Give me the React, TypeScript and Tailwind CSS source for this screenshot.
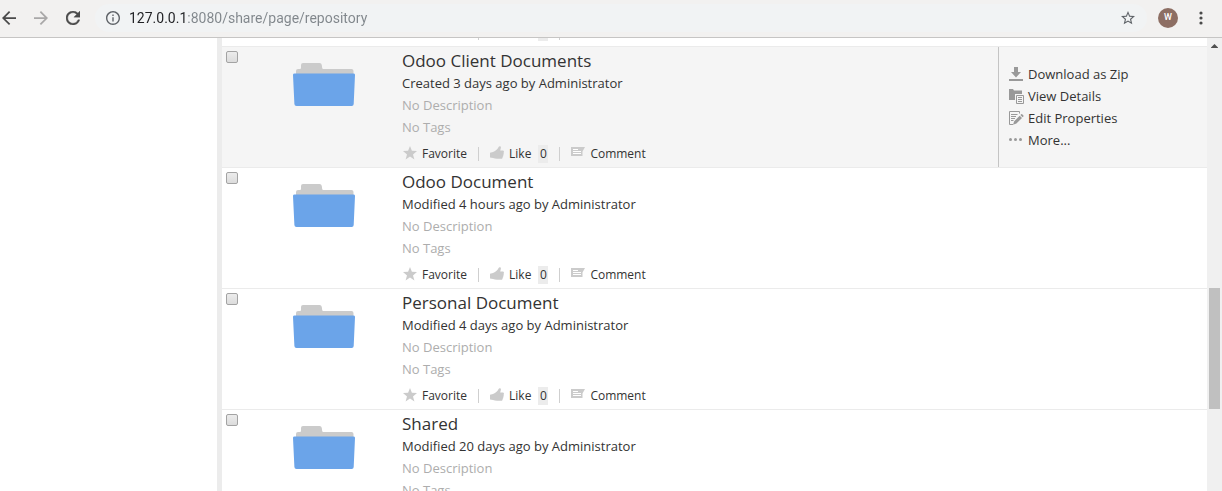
import React from "react";

type Item = { name: string; status: string; active?: boolean };

const items: Item[] = [
  { name: "Odoo Client Documents", status: "Created 3 days ago by Administrator", active: true },
  { name: "Odoo Document", status: "Modified 4 hours ago by Administrator" },
  { name: "Personal Document", status: "Modified 4 days ago by Administrator" },
  { name: "Shared", status: "Modified 20 days ago by Administrator" },
];

function FolderIcon() {
  return (
    <svg width="62" height="43" viewBox="0 0 62 43" aria-hidden="true">
      <path
        d="M3 14V8q0-2 2-2h2q1 0 1-1V2q0-2 2-2h16.500q2 0 2.300 2l.4 3q.2 1 1 1H58.500q2 0 2 2v6z"
        fill="#cbcbcb"
      />
      <path
        d="M1.500 10.500H60.500q1.600 0 1.500 1.600L60.700 41q-.1 2-2 2H3.500q-2 0-2.100-2L0 12.100q-.1-1.600 1.500-1.600z"
        fill="#6ba4e9"
      />
    </svg>
  );
}

function StarIcon() {
  return (
    <svg className="mb-0.5" width="14" height="14" viewBox="0 0 14 14" fill="#cbcbcb" aria-hidden="true">
      <path d="M7 0l1.900 4.800 5.100.3-4 3.300 1.400 5.100L7 10.600l-4.400 2.900L4 8.400 0 5.100l5.100-.3z" />
    </svg>
  );
}

function ThumbIcon() {
  return (
    <svg className="mb-0.5" width="14" height="14" viewBox="0 0 14 14" fill="#cbcbcb" aria-hidden="true">
      <path d="M0 6.800L3 6V12L0 11.600z" />
      <path d="M3 5.900C6 5 7.600 3 8.600 1q.5-.9 1.500-.7 1.100.3.8 1.500L10.200 4.600H12.600q1.400.1 1.400 1.200 0 .8-.6 1.100.6.4.4 1.200-.1.7-.7.9.4.4.2 1.100-.2.600-.800.8.3.5 0 1-.4.900-1.500.9H7Q5 12.600 3 12z" />
    </svg>
  );
}

function CommentIcon() {
  return (
    <svg className="mb-0.5" width="14" height="14" viewBox="0 0 14 14" aria-hidden="true">
      <path d="M0 1h14l-2.500 4.500V10H0z" fill="#cbcbcb" />
      <path d="M2 3.500h5M2 5.500h8M2 7.500h8" stroke="#fff" strokeWidth="1" />
    </svg>
  );
}

function DownloadIcon() {
  return (
    <svg width="15" height="15" viewBox="0 0 15 15" fill="#999" aria-hidden="true">
      <path d="M5 0h4v5h3L7 10.500 2 5h3zM0 12h14v2H0z" />
    </svg>
  );
}

function DetailsIcon() {
  return (
    <svg width="15" height="15" viewBox="0 0 15 15" aria-hidden="true">
      <path d="M0 0h4l1 1.500h8V5H6v6H0z" fill="#999" />
      <path d="M7.500 6.500h7v8h-7z" fill="#f5f5f5" stroke="#999" />
      <path d="M9 8.500h4M9 10.500h4M9 12.500h4" stroke="#999" />
    </svg>
  );
}

function EditIcon() {
  return (
    <svg width="15" height="15" viewBox="0 0 15 15" aria-hidden="true">
      <path d="M10.500 2.500V.5H.5v13H4M2 3.500h6.500M2 5.500h5M2 7.500h4M2 9.500h2.500" fill="none" stroke="#999" />
      <path d="M4 13.700l1.200-3.400 5.500-5.600 2.300 2.200-5.600 5.600zM11.400 4l.8-.8q.5-.4 1 0l1.200 1.200q.4.500 0 1l-.8.8z" fill="#999" />
    </svg>
  );
}

function MoreIcon() {
  return (
    <svg width="15" height="15" viewBox="0 0 15 15" fill="#999" aria-hidden="true">
      <circle cx="1.500" cy="6.500" r="1.500" />
      <circle cx="6.500" cy="6.500" r="1.500" />
      <circle cx="11.500" cy="6.500" r="1.500" />
    </svg>
  );
}

const rowActions = [
  { label: "Download as Zip", Icon: DownloadIcon },
  { label: "View Details", Icon: DetailsIcon },
  { label: "Edit Properties", Icon: EditIcon },
  { label: "More...", Icon: MoreIcon },
];

function Toolbar() {
  return (
    <header className="flex h-[38px] shrink-0 items-center border-b border-[#c6c5c4] bg-[#f2f1f0] pr-3.5 pb-0.5 pl-0.5">
      <nav className="flex items-center gap-[18px]">
        <button type="button" aria-label="Back">
          <svg width="14" height="14" viewBox="4 4 16 16" fill="#4a4a4a">
            <path d="M20 11H7.830l5.590-5.590L12 4l-8 8 8 8 1.410-1.410L7.830 13H20z" />
          </svg>
        </button>
        <button type="button" aria-label="Forward">
          <svg width="14" height="14" viewBox="4 4 16 16" fill="#a9a8a8">
            <path d="M4 11h12.170l-5.590-5.590L12 4l8 8-8 8-1.410-1.410L16.170 13H4z" />
          </svg>
        </button>
        <button type="button" aria-label="Reload">
          <svg width="14" height="14" viewBox="4 4 16 16" fill="#4a4a4a" stroke="#4a4a4a" strokeWidth=".4">
            <path d="M17.650 6.350A7.958 7.958 0 0 0 12 4c-4.420 0-7.990 3.580-7.990 8s3.570 8 7.990 8c3.730 0 6.840-2.550 7.730-6h-2.080A5.990 5.990 0 0 1 12 18c-3.310 0-6-2.690-6-6s2.690-6 6-6c1.660 0 3.140.69 4.220 1.780L13 11h7V4l-2.350 2.350z" />
          </svg>
        </button>
      </nav>
      <div className="ml-[15px] flex h-7 grow items-center rounded-full bg-[#f1f3f4] pr-3 pl-[11px]">
        <svg width="14" height="14" viewBox="2 2 20 20" fill="#5f6368" aria-hidden="true">
          <path d="M11 7h2v2h-2zm0 4h2v6h-2zm1-9C6.480 2 2 6.480 2 12s4.480 10 10 10 10-4.480 10-10S17.520 2 12 2zm0 18c-4.410 0-8-3.590-8-8s3.590-8 8-8 8 3.590 8 8-3.590 8-8 8z" />
        </svg>
        <input
          type="text"
          aria-label="Address"
          defaultValue="127.0.0.1:8080/share/page/repository"
          className="ml-[9px] min-w-0 grow bg-[linear-gradient(90deg,#202124_57px,#80868b_57px)] bg-clip-text font-[Roboto,sans-serif] text-[14px] leading-5 text-transparent outline-none"
        />
        <button type="button" aria-label="Bookmark this page">
          <svg width="14" height="14" viewBox="2 2 20 20" fill="#5f6368">
            <path d="M22 9.240l-7.190-.62L12 2 9.190 8.630 2 9.240l5.460 4.730L5.820 21 12 17.270 18.180 21l-1.630-7.030L22 9.240zM12 15.400l-3.760 2.270 1-4.280-3.320-2.880 4.380-.38L12 6.100l1.710 4.040 4.380.38-3.320 2.880 1 4.280L12 15.400z" />
          </svg>
        </button>
      </div>
      <button
        type="button"
        aria-label="Profile"
        className="ml-[11px] flex size-5 items-center justify-center rounded-full bg-[#8d6e63] font-[Roboto,sans-serif] text-[9px] font-medium text-white"
      >
        W
      </button>
      <button type="button" aria-label="Menu" className="ml-[15px] flex w-[15px] justify-center">
        <svg width="4" height="14" viewBox="0 0 4 14" fill="#4a4a4a">
          <circle cx="2" cy="2" r="1.600" />
          <circle cx="2" cy="7" r="1.600" />
          <circle cx="2" cy="12" r="1.600" />
        </svg>
      </button>
    </header>
  );
}

function Divider() {
  return <span className="h-[14px] w-px bg-[#cfcfcf]" />;
}

function SocialBar() {
  return (
    <div className="mt-[7px] flex h-[18px] items-center text-[12px] leading-[18px]">
      <button type="button" className="flex items-center gap-[5px] pl-px">
        <StarIcon />
        Favorite
      </button>
      <span className="w-[11px]" />
      <Divider />
      <button type="button" className="ml-[11px] flex items-center gap-[5px]">
        <ThumbIcon />
        Like
      </button>
      <span className="ml-[7px] w-2.5 bg-[#ececec] text-center">0</span>
      <span className="w-[11px]" />
      <Divider />
      <button type="button" className="ml-[11px] flex items-center gap-[5px]">
        <CommentIcon />
        Comment
      </button>
    </div>
  );
}

function Row({ item }: { item: Item }) {
  return (
    <li
      className={
        item.active
          ? "flex h-[121px] shrink-0 border-b border-[#ebebeb] bg-[#f5f5f5]"
          : "flex h-[121px] shrink-0 border-b border-[#ebebeb]"
      }
    >
      <div className="w-[71px] shrink-0 pt-1 pl-1">
        <input
          type="checkbox"
          aria-label={`Select ${item.name}`}
          className="block size-3 appearance-none rounded-[2px] border border-[#a3a3a3] bg-linear-to-b from-[#ececec] to-[#dcdcdc]"
        />
      </div>
      <div className="w-[109px] shrink-0 pt-4">
        <FolderIcon />
      </div>
      <div className="min-w-0 grow pt-[3px] text-[13px] leading-[22px]">
        <h2 className="text-[17px] leading-[22px]">
          <a href="#">{item.name}</a>
        </h2>
        <p>{item.status}</p>
        <p className="text-[#adadad]">No Description</p>
        <p className="text-[#adadad]">No Tags</p>
        <SocialBar />
      </div>
      {item.active && (
        <div className="w-[209px] shrink-0 border-l border-[#c4c4c4] pt-4 pl-2.5 text-[13px] leading-[22px]">
          {rowActions.map(({ label, Icon }) => (
            <a key={label} href="#" className="flex h-[22px] items-center gap-1">
              <Icon />
              {label}
            </a>
          ))}
        </div>
      )}
    </li>
  );
}

export default function App() {
  return (
    <div className="flex h-screen flex-col overflow-hidden bg-white font-['Open_Sans',sans-serif] text-[#333]">
      <Toolbar />
      <div className="flex min-h-0 grow">
        <aside className="w-[217px] shrink-0" />
        <div className="w-[5px] shrink-0 bg-[#ececec]" />
        <main className="flex min-w-0 grow flex-col overflow-hidden">
          {/* Lower edge of the row scrolled out above */}
          <div className="flex h-[9px] shrink-0 items-start border-b border-[#ebebeb] pl-64">
            <span className="h-0.5 w-px bg-[#cfcfcf]" />
            <span className="ml-[59px] h-[3px] w-2.5 bg-[#ececec]" />
            <span className="ml-[11px] h-0.5 w-px bg-[#cfcfcf]" />
          </div>
          <ul className="flex flex-col">
            {items.map((item) => (
              <Row key={item.name} item={item} />
            ))}
          </ul>
        </main>
        <div className="flex w-[15px] shrink-0 flex-col items-center bg-[#f0f0f0]" aria-hidden="true">
          <svg width="7" height="16" viewBox="0 0 7 16" fill="#505050">
            <path d="M3.500 6L7 9.500V10H0V9.500z" />
          </svg>
          <div className="mt-[234px] h-[121px] w-[11px] shrink-0 bg-[#c0c0c0]" />
        </div>
      </div>
    </div>
  );
}
